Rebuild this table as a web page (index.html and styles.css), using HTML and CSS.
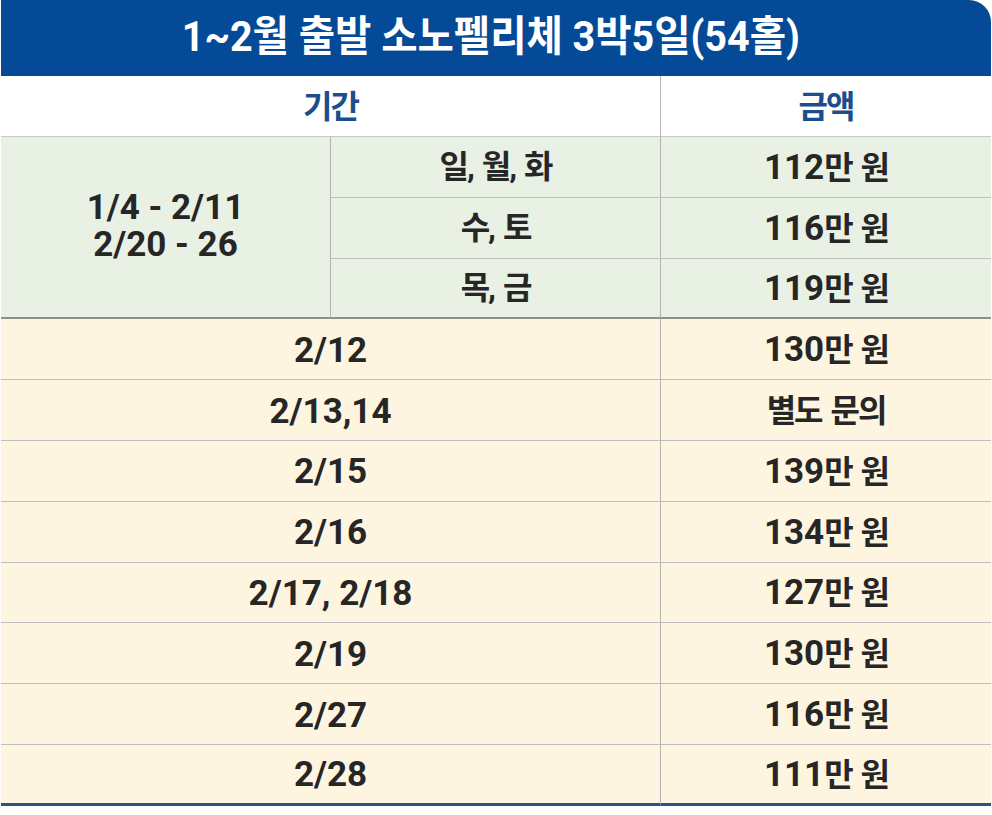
FILE: index.html
```html
<!DOCTYPE html>
<html lang="ko">
<head>
<meta charset="utf-8">
<title>1~2월 출발 소노펠리체 3박5일(54홀)</title>
<link rel="stylesheet" href="styles.css">
</head>
<body>
<div class="card">
  <h1 class="title"><span class="sq">1~2월 출발 소노펠리체 3박5일(54홀)</span></h1>
  <div class="table">
    <div class="cell head span2"><span class="ko">기간</span></div>
    <div class="cell head last"><span class="ko">금액</span></div>

    <div class="cell green merged"><span>1/4 - 2/11<br>2/20 - 26</span></div>
    <div class="cell green"><span class="ko">일, 월, 화</span></div>
    <div class="cell green last"><span>112<span class="ko">만 원</span></span></div>
    <div class="cell green"><span class="ko">수, 토</span></div>
    <div class="cell green last"><span>116<span class="ko">만 원</span></span></div>
    <div class="cell green grp-end"><span class="ko">목, 금</span></div>
    <div class="cell green last grp-end"><span>119<span class="ko">만 원</span></span></div>

    <div class="cell yellow span2"><span>2/12</span></div>
    <div class="cell yellow last"><span>130<span class="ko">만 원</span></span></div>
    <div class="cell yellow span2"><span>2/13,14</span></div>
    <div class="cell yellow last"><span class="ko">별도 문의</span></div>
    <div class="cell yellow span2"><span>2/15</span></div>
    <div class="cell yellow last"><span>139<span class="ko">만 원</span></span></div>
    <div class="cell yellow span2"><span>2/16</span></div>
    <div class="cell yellow last"><span>134<span class="ko">만 원</span></span></div>
    <div class="cell yellow span2"><span>2/17, 2/18</span></div>
    <div class="cell yellow last"><span>127<span class="ko">만 원</span></span></div>
    <div class="cell yellow span2"><span>2/19</span></div>
    <div class="cell yellow last"><span>130<span class="ko">만 원</span></span></div>
    <div class="cell yellow span2"><span>2/27</span></div>
    <div class="cell yellow last"><span>116<span class="ko">만 원</span></span></div>
    <div class="cell yellow span2 final"><span>2/28</span></div>
    <div class="cell yellow last final"><span>111<span class="ko">만 원</span></span></div>
  </div>
</div>
</body>
</html>
```
FILE: styles.css
```css
html, body {
  margin: 0;
  padding: 0;
  background: #ffffff;
}

body {
  font-family: "Roboto", "Noto Sans CJK KR", sans-serif;
  font-weight: 700;
  color: #262626;
}

.card {
  width: 990px;
  margin-left: 1px;
}

.title {
  box-sizing: border-box;
  margin: 0;
  height: 76px;
  padding-right: 10px;
  background: #054a97;
  border-top-right-radius: 22px;
  color: #ffffff;
  font-size: 42px;
  font-weight: 700;
  line-height: 74px;
  text-align: center;
  white-space: nowrap;
}

.sq {
  display: inline-block;
  transform: scaleX(0.94);
  transform-origin: center;
}

.table {
  display: grid;
  grid-template-columns: 330px 330px 330px;
  grid-template-rows: 61px repeat(11, 60.8px);
}

.cell {
  box-sizing: border-box;
  display: flex;
  align-items: center;
  justify-content: center;
  text-align: center;
  font-size: 35px;
  line-height: 37px;
  border-right: 1px solid #b3b3b3;
  border-bottom: 1px solid #bdbdbd;
  white-space: nowrap;
  padding-top: 2px;
}

.ko {
  font-size: 32px;
  letter-spacing: -2px;
  word-spacing: 3px;
}

.cell.last {
  border-right: none;
}

.span2 {
  grid-column: span 2;
}

.head {
  background: #ffffff;
  color: #1c4e8c;
  border-bottom-color: #c8c8c8;
}

.green {
  background: #e9f0e4;
}

.yellow {
  background: #fef5e0;
}

.merged {
  grid-row: span 3;
  border-bottom: 2px solid #8e8e8e;
  padding-top: 0;
  padding-bottom: 2px;
}

.grp-end {
  border-bottom: 2px solid #8e8e8e;
}

.final {
  border-bottom: 3px solid #2c5283;
}
```
